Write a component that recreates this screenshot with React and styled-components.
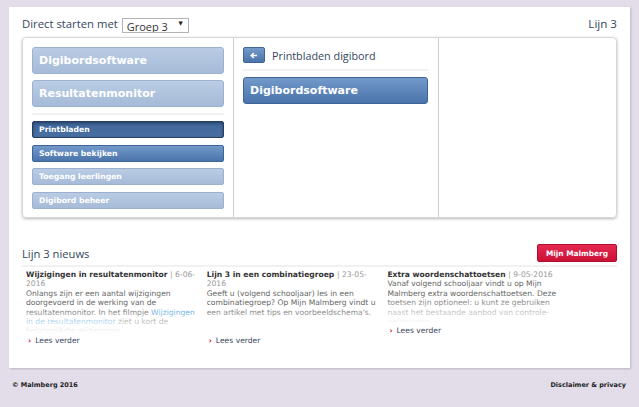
import React from "react";
import styled, { createGlobalStyle, css } from "styled-components";

const GlobalStyle = createGlobalStyle`
  html, body {
    margin: 0;
    padding: 0;
    background: #e2dde9;
  }
  body {
    font-family: "DejaVu Sans", Verdana, sans-serif;
  }
`;

const Page = styled.div`
  padding-top: 7px;
`;

const Panel = styled.main`
  width: 621px;
  box-sizing: border-box;
  margin: 0 9px;
  background: #fff;
  padding: 9px 13px 23px;
  box-shadow: 1px 1px 2px rgba(0, 0, 0, 0.18);
`;

const TopBar = styled.div`
  display: flex;
  align-items: center;
  justify-content: space-between;
  height: 15px;
  margin-bottom: 6px;
`;

const Starter = styled.div`
  display: flex;
  align-items: center;
  gap: 4px;
`;

const HeadText = styled.span`
  font-family: "Open Sans", sans-serif;
  font-size: ${(p) => p.size || "11.3px"};
  color: #34465e;
  line-height: 15px;
`;

const SelectWrap = styled.div`
  position: relative;
  width: 67px;
  height: 15px;
`;

const Select = styled.select`
  appearance: none;
  width: 100%;
  height: 100%;
  box-sizing: border-box;
  border: 1px solid #b3b3b3;
  border-radius: 0;
  background: #fff;
  padding: 0 0 0 4px;
  font-family: "Open Sans", sans-serif;
  font-size: 11px;
  color: #333;
  outline: none;
`;

const Arrow = styled.span`
  position: absolute;
  right: 6px;
  top: 4px;
  font-size: 5.5px;
  color: #222;
  pointer-events: none;
`;

const Box = styled.section`
  display: grid;
  grid-template-columns: 211px 205px 1fr;
  height: 181px;
  box-sizing: border-box;
  border: 1px solid #d6d6d6;
  border-radius: 4px;
  box-shadow: 0 1px 3px rgba(0, 0, 0, 0.28);
  overflow: hidden;
`;

const Column = styled.div`
  display: flex;
  flex-direction: column;
  padding: 9px ${(p) => p.padRight || "9px"} 9px 9px;
  border-right: ${(p) => (p.last ? "0" : "1px solid #cfcfcf")};
`;

/* buttons already carry their own bottom margin, so only space below */
const Divider = styled.div`
  flex: none;
  height: 2px;
  background: #f1f1f1;
  margin: ${(p) => (p.afterButton ? "0 0 6px" : "6px 0")};
`;

const tones = {
  light: css`
    background: linear-gradient(#bacce4, #a6bbd8);
    border: 1px solid #9cb1cf;
    color: #fff;
  `,
  dark: css`
    background: linear-gradient(#7299c9, #4a74ab);
    border: 1px solid #3e6598;
    color: #fff;
  `,
  active: css`
    background: linear-gradient(#3f6699, #4a70a3);
    border: 1px solid #253f66;
    box-shadow: inset 0 1px 3px rgba(0, 0, 0, 0.45);
    color: #fff;
  `,
};

const NavButton = styled.button`
  flex: none;
  display: flex;
  align-items: center;
  width: 100%;
  box-sizing: border-box;
  height: ${(p) => (p.small ? "17px" : "27px")};
  margin: 0 0 ${(p) => (p.small ? "6.5px" : "6px")};
  padding: 0 6px;
  border-radius: ${(p) => (p.small ? "2px" : "3px")};
  font-family: "DejaVu Sans", Verdana, sans-serif;
  font-weight: bold;
  font-size: ${(p) => (p.small ? "7.7px" : "11px")};
  text-align: left;
  cursor: pointer;
  ${(p) => tones[p.tone]}
`;

const BackRow = styled.div`
  display: flex;
  align-items: center;
  gap: 7px;
  height: 16px;
`;

const BackButton = styled.button`
  width: 22px;
  height: 16px;
  box-sizing: border-box;
  padding: 0;
  border-radius: 2px;
  display: flex;
  align-items: center;
  justify-content: center;
  ${tones.dark}
`;

const NewsHead = styled.div`
  display: flex;
  align-items: center;
  justify-content: space-between;
  margin-top: 26px;
  padding-bottom: 3px;
  border-bottom: 2px solid #f1f1f1;
`;

const RedButton = styled.button`
  height: 18px;
  box-sizing: border-box;
  padding: 0 8px;
  border-radius: 2px;
  border: 1px solid #b20d2c;
  background: linear-gradient(#e52a52, #cc1136);
  color: #fff;
  font-family: "DejaVu Sans", Verdana, sans-serif;
  font-weight: bold;
  font-size: 7.4px;
`;

const NewsGrid = styled.div`
  display: grid;
  grid-template-columns: repeat(3, 176px);
  column-gap: 4.7px;
  padding-left: 4px;
  margin-top: 3px;
`;

const Item = styled.article`
  font-size: 7.6px;
  line-height: 9.4px;
`;

const ItemTitle = styled.div`
  font-weight: bold;
  color: #333;
`;

const Date = styled.span`
  font-weight: normal;
  color: #999;
`;

const Desc = styled.p`
  position: relative;
  margin: 0;
  height: 47px;
  overflow: hidden;
  color: #666;

  &::after {
    content: "";
    position: absolute;
    left: 0;
    right: 0;
    bottom: 0;
    height: 30px;
    background: linear-gradient(rgba(255, 255, 255, 0), #fff 90%);
  }
`;

const Link = styled.a`
  color: #3fa0da;
  text-decoration: none;
`;

const More = styled.a`
  display: flex;
  align-items: center;
  gap: 4px;
  color: #3a4760;
  text-decoration: none;
  padding-left: 2px;
`;

const Chevron = styled.span`
  color: #d2143a;
  font-weight: bold;
`;

const Footer = styled.footer`
  display: flex;
  justify-content: space-between;
  padding: 12px 13px 0 12px;
  font-size: 6.5px;
  line-height: 10px;
  font-weight: bold;
  color: #222;
`;

const news = [
  {
    title: "Wijzigingen in resultatenmonitor",
    date: "6-06-2016",
    body: (
      <>
        Onlangs zijn er een aantal wijzigingen doorgevoerd in de werking van de
        resultatenmonitor. In het filmpje{" "}
        <Link href="#">Wijzigingen in de resultatenmonitor</Link> ziet u kort de
        belangrijkste wijzigingen.
      </>
    ),
  },
  {
    title: "Lijn 3 in een combinatiegroep",
    date: "23-05-2016",
    body: "Geeft u (volgend schooljaar) les in een combinatiegroep? Op Mijn Malmberg vindt u een artikel met tips en voorbeeldschema's.",
  },
  {
    title: "Extra woordenschattoetsen",
    date: "9-05-2016",
    body: "Vanaf volgend schooljaar vindt u op Mijn Malmberg extra woordenschattoetsen. Deze toetsen zijn optioneel: u kunt ze gebruiken naast het bestaande aanbod van controle-oefeningen.",
  },
];

const App = () => {
  return (
    <Page>
      <GlobalStyle />
      <Panel>
        <TopBar>
          <Starter>
            <HeadText>Direct starten met</HeadText>
            <SelectWrap>
              <Select defaultValue="3">
                <option value="3">Groep 3</option>
                <option value="4">Groep 4</option>
              </Select>
              <Arrow>▼</Arrow>
            </SelectWrap>
          </Starter>
          <HeadText size="11.6px">Lijn 3</HeadText>
        </TopBar>

        <Box>
          <Column>
            <NavButton tone="light">Digibordsoftware</NavButton>
            <NavButton tone="light">Resultatenmonitor</NavButton>
            <Divider afterButton />
            <NavButton small tone="active">Printbladen</NavButton>
            <NavButton small tone="dark">Software bekijken</NavButton>
            <NavButton small tone="light">Toegang leerlingen</NavButton>
            <NavButton small tone="light">Digibord beheer</NavButton>
          </Column>
          <Column padRight="10px">
            <BackRow>
              <BackButton aria-label="Terug">
                <svg width="8" height="7" viewBox="0 0 8 7">
                  <path
                    d="M7 3.5H1.8M3.8 1L1.2 3.5 3.8 6"
                    stroke="#fff"
                    strokeWidth="1.5"
                    fill="none"
                  />
                </svg>
              </BackButton>
              <HeadText size="10.8px">Printbladen digibord</HeadText>
            </BackRow>
            <Divider />
            <NavButton tone="dark">Digibordsoftware</NavButton>
          </Column>
          <Column last />
        </Box>

        <NewsHead>
          <HeadText size="11.2px">Lijn 3 nieuws</HeadText>
          <RedButton>Mijn Malmberg</RedButton>
        </NewsHead>

        <NewsGrid>
          {news.map((n) => (
            <Item key={n.title}>
              <ItemTitle>
                {n.title} <Date>| {n.date}</Date>
              </ItemTitle>
              <Desc>{n.body}</Desc>
              <More href="#">
                <Chevron>›</Chevron>
                Lees verder
              </More>
            </Item>
          ))}
        </NewsGrid>
      </Panel>
      <Footer>
        <span>© Malmberg 2016</span>
        <span>Disclaimer &amp; privacy</span>
      </Footer>
    </Page>
  );
};

export default App;
